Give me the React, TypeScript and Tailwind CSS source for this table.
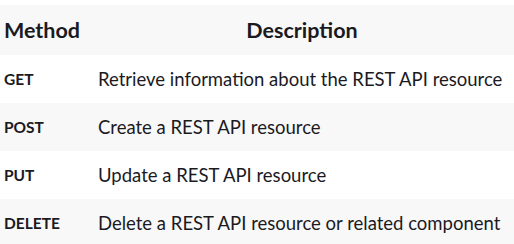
const rows = [
  { method: 'GET', desc: 'Retrieve information about the REST API resource' },
  { method: 'POST', desc: 'Create a REST API resource' },
  { method: 'PUT', desc: 'Update a REST API resource' },
  { method: 'DELETE', desc: 'Delete a REST API resource or related component' },
];

export default function App() {
  return (
    <div className="w-[514px] h-[244px] overflow-hidden bg-white pt-[5px] text-[#1a1a1f] font-['Lato',sans-serif]">
      <div className="grid grid-cols-[94px_1fr] h-[50px] items-center bg-[#f8f8f8] font-bold text-[21.5px]">
        <div className="pl-[4px]">Method</div>
        <div className="text-center pr-[4px]">Description</div>
      </div>
      {rows.map((row, i) => (
        <div
          key={row.method}
          className={`grid grid-cols-[98px_1fr] h-[48px] items-center ${i % 2 === 1 ? 'bg-[#f8f8f8]' : 'bg-white'}`}
        >
          <div className="pl-[4px] pt-[2px] font-bold text-[15.5px]">{row.method}</div>
          <div className="pt-[1px] text-[18.5px]">{row.desc}</div>
        </div>
      ))}
    </div>
  );
}
